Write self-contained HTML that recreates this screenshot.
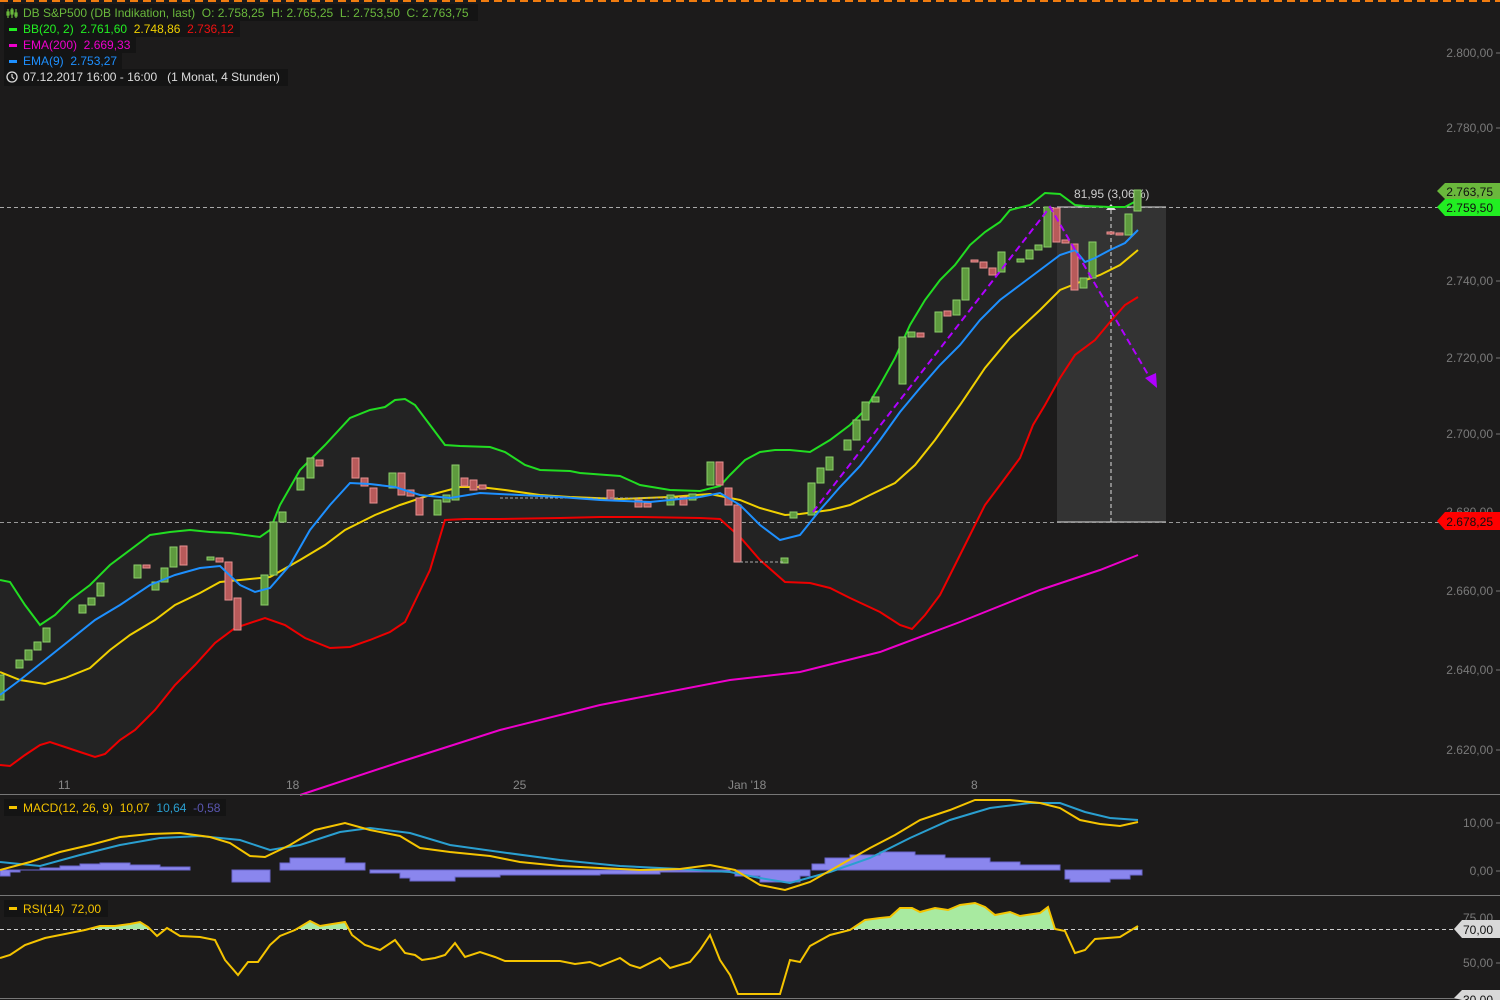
<!DOCTYPE html>
<html><head><meta charset="utf-8"><style>
html,body{margin:0;padding:0;background:#1c1b1b;}
svg{display:block;font-family:"Liberation Sans",sans-serif;}
text{white-space:pre;}
</style></head><body>
<svg width="1500" height="1000" viewBox="0 0 1500 1000" xmlns="http://www.w3.org/2000/svg" xml:space="preserve">
<rect width="1500" height="1000" fill="#1c1b1b"/>
<line x1="0" y1="1" x2="1500" y2="1" stroke="#f07c10" stroke-width="2" stroke-dasharray="8,5"/>

<polygon fill="#232323" points="0,580 10,582 25,605 40,625 55,615 70,600 90,585 110,565 130,550 150,535 170,532 190,530 210,532 230,533 260,537 270,530 280,505 300,470 325,445 350,418 370,410 385,407 395,400 405,399 415,405 430,425 445,445 460,446 490,447 505,452 525,465 540,470 570,471 580,473 620,476 640,485 670,490 700,491 720,486 730,475 745,460 760,452 775,450 790,450 810,452 830,440 850,425 865,410 880,385 895,358 910,325 925,300 940,280 955,265 970,245 985,232 1000,222 1010,210 1030,205 1045,193 1060,194 1075,205 1085,206 1110,207 1125,207 1138,200 1138,297 1125,305 1110,322 1095,340 1075,355 1060,378 1045,405 1033,425 1020,458 1000,485 985,505 970,535 955,565 940,595 925,615 912,629 900,625 880,612 850,598 830,588 810,583 785,582 760,560 740,537 720,519 700,518 640,517 600,517 560,518 500,519 465,519 445,520 430,570 418,595 405,622 390,632 370,640 350,647 330,648 305,638 285,625 265,618 235,628 215,643 195,665 175,685 155,710 135,730 120,740 105,754 95,757 80,752 65,747 50,742 40,745 25,755 10,766 0,765"/>

<rect x="1057" y="207" width="109" height="315" fill="#333333"/>
<line x1="1057" y1="207" x2="1166" y2="207" stroke="#ddd" stroke-width="1"/>
<line x1="1057" y1="522" x2="1166" y2="522" stroke="#ddd" stroke-width="1"/>
<line x1="1111" y1="210" x2="1111" y2="522" stroke="#ddd" stroke-width="1" stroke-dasharray="4,3"/>
<polygon points="1106,210 1116,210 1111,204" fill="#ddd"/>
<text x="1074" y="198" font-size="12" fill="#ccc">81,95 (3,06%)</text>

<line x1="0" y1="207.5" x2="1440" y2="207.5" stroke="#aaa" stroke-dasharray="4,3"/>
<line x1="0" y1="522.5" x2="1440" y2="522.5" stroke="#999" stroke-dasharray="4,3"/>

<polyline fill="none" stroke="#ee00cc" stroke-width="2" points="300,795 400,762 500,730 600,705 730,680 800,672 880,652 960,622 1040,590 1100,570 1138,555"/>
<polyline fill="none" stroke="#22dd22" stroke-width="2" points="0,580 10,582 25,605 40,625 55,615 70,600 90,585 110,565 130,550 150,535 170,532 190,530 210,532 230,533 260,537 270,530 280,505 300,470 325,445 350,418 370,410 385,407 395,400 405,399 415,405 430,425 445,445 460,446 490,447 505,452 525,465 540,470 570,471 580,473 620,476 640,485 670,490 700,491 720,486 730,475 745,460 760,452 775,450 790,450 810,452 830,440 850,425 865,410 880,385 895,358 910,325 925,300 940,280 955,265 970,245 985,232 1000,222 1010,210 1030,205 1045,193 1060,194 1075,205 1085,206 1110,207 1125,207 1138,200"/>
<polyline fill="none" stroke="#e00" stroke-width="2" points="0,765 10,766 25,755 40,745 50,742 65,747 80,752 95,757 105,754 120,740 135,730 155,710 175,685 195,665 215,643 235,628 265,618 285,625 305,638 330,648 350,647 370,640 390,632 405,622 418,595 430,570 445,520 465,519 500,519 560,518 600,517 640,517 700,518 720,519 740,537 760,560 785,582 810,583 830,588 850,598 880,612 900,625 912,629 925,615 940,595 955,565 970,535 985,505 1000,485 1020,458 1033,425 1045,405 1060,378 1075,355 1095,340 1110,322 1125,305 1138,297"/>
<polyline fill="none" stroke="#f0d000" stroke-width="2" points="0,672 20,680 45,684 65,678 90,668 110,650 130,635 155,620 175,605 200,593 220,582 240,580 270,577 300,560 325,545 345,530 375,515 400,505 430,495 460,487 480,487 505,490 540,495 570,497 620,499 670,497 710,494 740,500 760,508 785,515 800,514 830,510 850,505 870,495 895,483 915,465 935,440 960,405 985,368 1010,338 1040,310 1060,290 1080,282 1100,275 1120,265 1138,250"/>

<g stroke-width="1">
<g fill="#5e9a3e" stroke="#8ccf6a">
<rect x="-3" y="675" width="7" height="25"/><rect x="16" y="660" width="7" height="8"/><rect x="25" y="650" width="7" height="10"/><rect x="34" y="642" width="7" height="8"/><rect x="43" y="628" width="7" height="14"/><rect x="79" y="605" width="7" height="8"/><rect x="88" y="598" width="7" height="7"/><rect x="97" y="583" width="7" height="13"/><rect x="134" y="565" width="7" height="13"/><rect x="152" y="582" width="7" height="8"/><rect x="161" y="568" width="7" height="14"/><rect x="170" y="547" width="7" height="20"/><rect x="207" y="557" width="7" height="3"/><rect x="261" y="575" width="7" height="30"/><rect x="270" y="522" width="7" height="53"/><rect x="279" y="512" width="7" height="10"/><rect x="297" y="478" width="7" height="12"/><rect x="307" y="458" width="7" height="20"/><rect x="389" y="473" width="7" height="15"/><rect x="434" y="500" width="7" height="15"/><rect x="443" y="495" width="7" height="7"/><rect x="452" y="465" width="7" height="35"/><rect x="667" y="495" width="7" height="10"/><rect x="689" y="494" width="7" height="6"/><rect x="707" y="462" width="7" height="23"/><rect x="781" y="558" width="7" height="5"/><rect x="790" y="512" width="7" height="6"/><rect x="808" y="483" width="7" height="32"/><rect x="817" y="468" width="7" height="15"/><rect x="826" y="457" width="7" height="13"/><rect x="844" y="440" width="7" height="10"/><rect x="853" y="420" width="7" height="20"/><rect x="862" y="402" width="7" height="18"/><rect x="872" y="397" width="7" height="5"/><rect x="899" y="337" width="7" height="47"/><rect x="908" y="332" width="7" height="5"/><rect x="935" y="312" width="7" height="20"/><rect x="953" y="300" width="7" height="15"/><rect x="962" y="268" width="7" height="32"/><rect x="998" y="252" width="7" height="20"/><rect x="1017" y="259" width="7" height="3"/><rect x="1026" y="250" width="7" height="9"/><rect x="1035" y="245" width="7" height="5"/><rect x="1044" y="207" width="7" height="40"/><rect x="1080" y="278" width="7" height="10"/><rect x="1089" y="242" width="7" height="36"/><rect x="1125" y="214" width="7" height="21"/><rect x="1134" y="190" width="7" height="21"/>
</g>
<g fill="#b85a5a" stroke="#e89090">
<rect x="143" y="565" width="7" height="3"/><rect x="180" y="546" width="7" height="19"/><rect x="216" y="558" width="7" height="4"/><rect x="225" y="562" width="7" height="38"/><rect x="234" y="598" width="7" height="32"/><rect x="316" y="460" width="7" height="6"/><rect x="352" y="458" width="7" height="20"/><rect x="361" y="478" width="7" height="8"/><rect x="370" y="488" width="7" height="15"/><rect x="398" y="473" width="7" height="22"/><rect x="407" y="490" width="7" height="6"/><rect x="416" y="498" width="7" height="17"/><rect x="461" y="478" width="7" height="8"/><rect x="470" y="480" width="7" height="10"/><rect x="479" y="485" width="7" height="4"/><rect x="607" y="490" width="7" height="10"/><rect x="635" y="500" width="7" height="7"/><rect x="644" y="503" width="7" height="4"/><rect x="680" y="497" width="7" height="8"/><rect x="716" y="462" width="7" height="23"/><rect x="725" y="488" width="7" height="17"/><rect x="734" y="505" width="7" height="57"/><rect x="917" y="333" width="7" height="4"/><rect x="944" y="311" width="7" height="5"/><rect x="971" y="260" width="7" height="2"/><rect x="980" y="262" width="7" height="6"/><rect x="989" y="268" width="7" height="7"/><rect x="1053" y="208" width="7" height="34"/><rect x="1062" y="240" width="7" height="3"/><rect x="1071" y="244" width="7" height="46"/><rect x="1107" y="232" width="7" height="2"/><rect x="1116" y="233" width="7" height="2"/>
</g>
<g stroke="#aaa" stroke-dasharray="3,2"><line x1="500" y1="498" x2="700" y2="498"/><line x1="740" y1="562" x2="785" y2="562"/></g>
</g>

<polyline fill="none" stroke="#1e90ff" stroke-width="2" points="0,695 20,680 45,660 70,640 95,620 120,605 150,585 175,575 200,568 220,566 240,585 255,592 270,588 290,565 310,530 330,505 350,483 370,484 395,487 420,495 450,498 480,493 520,495 560,497 600,500 650,502 700,497 720,493 740,505 760,525 780,540 800,535 820,510 840,487 860,466 880,440 900,412 920,388 940,365 960,345 980,320 1000,300 1020,285 1040,270 1060,255 1075,250 1085,262 1095,258 1110,250 1125,243 1138,230"/>

<polyline fill="none" stroke="#b000ff" stroke-width="2" stroke-dasharray="7,4" points="813,512 1050,207 1150,378"/>
<polygon points="1157,388 1145,378 1156,373" fill="#b000ff"/>

<g font-size="12" fill="#888"><text x="58" y="789">11</text><text x="286" y="789">18</text><text x="513" y="789">25</text><text x="728" y="789">Jan '18</text><text x="971" y="789">8</text></g>
<line x1="0" y1="794.5" x2="1500" y2="794.5" stroke="#777"/>
<line x1="0" y1="895.5" x2="1500" y2="895.5" stroke="#777"/>
<line x1="0" y1="998.5" x2="1500" y2="998.5" stroke="#777"/>

<path fill="#8a86ee" stroke="#6a66cc" d="M0,870 V876 H10 V872 H20 V870 H40 V868 H60 V866 H80 V864 H100 V863 H130 V865 H160 V867 H190 V870 Z M232,870 V882 H270 V870 Z M280,870 V863 H290 V858 H345 V863 H365 V870 Z M370,870 V873 H400 V878 H410 V881 H455 V877 H500 V875 H600 V874 H660 V872 H730 V870 Z M735,870 V876 H760 V882 H800 V876 H810 V870 Z M812,870 V864 H825 V858 H850 V855 H880 V852 H915 V855 H945 V858 H990 V862 H1020 V865 H1060 V870 Z M1065,870 V879 H1070 V882 H1110 V879 H1130 V875 H1142 V870 Z"/>
<polyline fill="none" stroke="#2a9fd0" stroke-width="2" points="0,862 40,866 80,855 120,845 160,838 200,836 240,840 270,850 300,845 340,832 370,828 410,833 450,845 500,852 560,860 620,866 680,869 730,872 760,878 790,883 830,872 870,858 910,838 950,820 990,808 1030,803 1060,803 1085,812 1110,818 1138,820"/>
<polyline fill="none" stroke="#f5c400" stroke-width="2" points="0,870 30,862 60,852 90,845 120,837 150,834 180,833 210,837 230,843 250,856 265,857 290,845 315,830 345,823 370,830 400,836 420,848 450,852 490,856 520,862 560,866 600,868 640,870 680,869 710,865 735,870 760,885 785,890 810,882 840,865 870,848 895,835 920,820 950,810 975,800 1010,800 1040,803 1060,808 1080,820 1100,824 1120,826 1138,822"/>

<defs><clipPath id="ab"><rect x="0" y="896" width="1500" height="33"/></clipPath></defs>
<polygon clip-path="url(#ab)" fill="#a8eaa0" points="0,929 0,958 10,955 25,945 45,938 65,934 85,930 100,926 115,926 130,924 140,922 148,927 157,936 167,928 180,936 200,937 215,940 225,960 238,975 248,962 258,962 270,945 280,936 295,930 310,921 320,926 345,922 352,935 365,945 380,950 395,940 405,953 415,955 422,960 435,958 445,955 455,943 465,957 480,952 495,957 505,961 560,961 575,964 590,962 600,966 620,958 630,965 640,968 660,958 670,968 690,962 700,950 710,935 720,960 730,975 738,994 780,994 790,960 800,962 810,946 830,935 850,930 865,920 880,918 890,917 900,908 912,908 920,912 935,908 948,910 960,905 975,903 985,907 995,915 1010,912 1020,916 1040,913 1048,907 1055,929 1065,931 1075,953 1085,950 1095,939 1120,937 1138,926 1138,929"/>
<line x1="0" y1="929.5" x2="1460" y2="929.5" stroke="#ccc" stroke-dasharray="4,3"/>
<polyline fill="none" stroke="#f5c400" stroke-width="2" points="0,958 10,955 25,945 45,938 65,934 85,930 100,926 115,926 130,924 140,922 148,927 157,936 167,928 180,936 200,937 215,940 225,960 238,975 248,962 258,962 270,945 280,936 295,930 310,921 320,926 345,922 352,935 365,945 380,950 395,940 405,953 415,955 422,960 435,958 445,955 455,943 465,957 480,952 495,957 505,961 560,961 575,964 590,962 600,966 620,958 630,965 640,968 660,958 670,968 690,962 700,950 710,935 720,960 730,975 738,994 780,994 790,960 800,962 810,946 830,935 850,930 865,920 880,918 890,917 900,908 912,908 920,912 935,908 948,910 960,905 975,903 985,907 995,915 1010,912 1020,916 1040,913 1048,907 1055,929 1065,931 1075,953 1085,950 1095,939 1120,937 1138,926"/>

<g font-size="12" fill="#7a7a7a" text-anchor="end">
<text x="1493" y="57">2.800,00</text><text x="1493" y="132">2.780,00</text><text x="1493" y="285">2.740,00</text><text x="1493" y="362">2.720,00</text><text x="1493" y="438">2.700,00</text><text x="1493" y="516">2.680,00</text><text x="1493" y="595">2.660,00</text><text x="1493" y="674">2.640,00</text><text x="1493" y="754">2.620,00</text>
<text x="1493" y="827">10,00</text><text x="1493" y="875">0,00</text><text x="1493" y="922">75,00</text><text x="1493" y="967">50,00</text>
</g>
<g stroke="#7a7a7a"><line x1="1496" y1="53" x2="1500" y2="53"/><line x1="1496" y1="128" x2="1500" y2="128"/><line x1="1496" y1="281" x2="1500" y2="281"/><line x1="1496" y1="358" x2="1500" y2="358"/><line x1="1496" y1="434" x2="1500" y2="434"/><line x1="1496" y1="591" x2="1500" y2="591"/><line x1="1496" y1="670" x2="1500" y2="670"/><line x1="1496" y1="750" x2="1500" y2="750"/><line x1="1496" y1="823" x2="1500" y2="823"/><line x1="1496" y1="871" x2="1500" y2="871"/><line x1="1496" y1="963" x2="1500" y2="963"/></g>

<polygon points="1437,191 1445,183 1500,183 1500,199 1445,199" fill="#6ab83c"/>
<polygon points="1437,207 1445,199 1500,199 1500,216 1445,216" fill="#22ee22"/>
<polygon points="1437,521 1445,512 1500,512 1500,530 1445,530" fill="#ff0000"/>
<polygon points="1454,929 1462,920 1500,920 1500,938 1462,938" fill="#d8d8d8"/>
<polygon points="1454,998 1462,990 1500,990 1500,1000 1462,1000" fill="#d8d8d8"/>
<g font-size="12" fill="#111" text-anchor="end">
<text x="1493" y="196">2.763,75</text><text x="1493" y="212">2.759,50</text><text x="1493" y="526">2.678,25</text><text x="1493" y="934">70,00</text><text x="1493" y="1004">30,00</text>
</g>

<rect x="4" y="4" width="474" height="17" fill="#141414"/>
<rect x="4" y="21" width="236" height="16" fill="#141414"/>
<rect x="4" y="37" width="132" height="16" fill="#141414"/>
<rect x="4" y="53" width="118" height="16" fill="#141414"/>
<rect x="4" y="69" width="284" height="17" fill="#141414"/>
<g stroke="#6ab83c" stroke-width="1.2" fill="none"><line x1="8" y1="9" x2="8" y2="18"/><line x1="12" y1="8" x2="12" y2="18"/><line x1="16" y1="9" x2="16" y2="18"/><rect x="7" y="12" width="2" height="3"/><rect x="11" y="10" width="2" height="4"/><rect x="15" y="13" width="2" height="3"/></g>
<text x="23" y="17" font-size="12" fill="#6ab83c">DB S&amp;P500 (DB Indikation, last)  O: 2.758,25  H: 2.765,25  L: 2.753,50  C: 2.763,75</text>
<rect x="9" y="28" width="8" height="3" fill="#22ee22"/>
<text x="23" y="33" font-size="12"><tspan fill="#22ee22">BB(20, 2)  2.761,60  </tspan><tspan fill="#f0d000">2.748,86  </tspan><tspan fill="#ee1111">2.736,12</tspan></text>
<rect x="9" y="44" width="8" height="3" fill="#ee00cc"/>
<text x="23" y="49" font-size="12" fill="#ee00cc">EMA(200)  2.669,33</text>
<rect x="9" y="60" width="8" height="3" fill="#1e90ff"/>
<text x="23" y="65" font-size="12" fill="#1e90ff">EMA(9)  2.753,27</text>
<circle cx="12" cy="77" r="5" fill="none" stroke="#ddd" stroke-width="1.3"/><path d="M12,74 V77 L14,79" stroke="#ddd" stroke-width="1.2" fill="none"/>
<text x="23" y="81" font-size="12" fill="#ddd">07.12.2017 16:00 - 16:00   (1 Monat, 4 Stunden)</text>

<rect x="4" y="799" width="222" height="17" fill="#141414"/>
<rect x="9" y="806" width="8" height="3" fill="#f5c400"/>
<text x="23" y="812" font-size="12"><tspan fill="#f5c400">MACD(12, 26, 9)  10,07  </tspan><tspan fill="#2a9fd0">10,64  </tspan><tspan fill="#5a56b0">-0,58</tspan></text>
<rect x="4" y="900" width="104" height="17" fill="#141414"/>
<rect x="9" y="907" width="8" height="3" fill="#f5c400"/>
<text x="23" y="913" font-size="12" fill="#f5c400">RSI(14)  72,00</text>
</svg>
</body></html>
